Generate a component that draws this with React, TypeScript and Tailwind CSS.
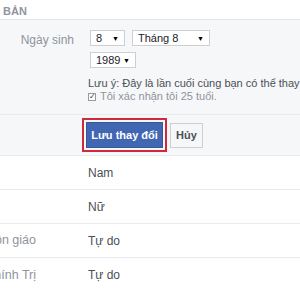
const Select = ({ value, width }: { value: string; width: string }) => {
  return (
    <div
      className={`${width} h-[16px] flex items-center justify-between border border-[#ccd0d5] bg-white pl-[5px] pr-[5px] text-[11px] text-[#1d2129] leading-none`}
    >
      <span>{value}</span>
      <span className="text-[7px] text-black">▼</span>
    </div>
  );
};

const InfoRow = ({
  label,
  value,
  last,
}: {
  label: string;
  value: string;
  last?: boolean;
}) => {
  return (
    <div
      className={`flex h-[34px] items-center bg-white ${
        last ? "" : "border-b border-[#e9ebee]"
      }`}
    >
      <div className="w-[36px] shrink-0 overflow-hidden whitespace-nowrap text-right text-[12.5px] text-[#90949c]">
        <span className="float-right">{label}</span>
      </div>
      <div className="ml-[52px] text-[12px] text-[#4b4f56]">{value}</div>
    </div>
  );
};

export default function App() {
  return (
    <div className="w-[300px] h-[300px] overflow-hidden bg-white font-['Liberation_Sans',Arial,sans-serif]">
      <div className="h-[20px] border-b border-[#e5e5e5] bg-white pl-[3px] pt-[3px] text-[11px] font-bold text-[#90949c]">
        BẢN
      </div>

      <div className="flex border-b border-[#e9ebee] bg-[#f6f7f9] pt-[10px] pb-[12px]">
        <div className="w-[74px] shrink-0 pt-[1px] text-right text-[12px] text-[#90949c]">
          Ngày sinh
        </div>
        <div className="ml-[14px] flex min-w-0 flex-col">
          <div className="flex gap-[7px] pl-[2px]">
            <Select value="8" width="w-[35px]" />
            <Select value="Tháng 8" width="w-[78px]" />
          </div>
          <div className="mt-[6px] pl-[2px]">
            <Select value="1989" width="w-[46px]" />
          </div>
          <div className="mt-[9px] whitespace-nowrap text-[11px] leading-[13px] text-[#4b4f56]">
            Lưu ý: Đây là lần cuối cùng bạn có thể thay đổi ngày sinh
          </div>
          <div className="mt-[1px] flex items-center gap-[4px] whitespace-nowrap text-[11px] leading-[11px] text-[#90949c]">
            <span className="flex h-[8px] w-[8px] items-center justify-center border border-[#9a9a9a] bg-white text-[8px] leading-none text-[#333]">
              ✓
            </span>
            <span>Tôi xác nhận tôi 25 tuổi.</span>
          </div>
        </div>
      </div>

      <div className="flex h-[41px] items-center border-b border-[#e9ebee] bg-[#f6f7f9] pl-[82px]">
        <div className="border-2 border-[#d0293a] p-[2px]">
          <button className="h-[26px] w-[77px] border border-[#365899] bg-[#4267b2] text-[11px] font-bold text-white">
            Lưu thay đổi
          </button>
        </div>
        <button className="ml-[3px] h-[25px] w-[33px] border border-[#ccd0d5] bg-[#f6f7f9] text-[11px] font-bold text-[#4b4f56]">
          Hủy
        </button>
      </div>

      <InfoRow label="" value="Nam" />
      <InfoRow label="" value="Nữ" />
      <InfoRow label="Tôn giáo" value="Tự do" />
      <InfoRow label="Quan điểm Chính Trị" value="Tự do" last />
    </div>
  );
}
